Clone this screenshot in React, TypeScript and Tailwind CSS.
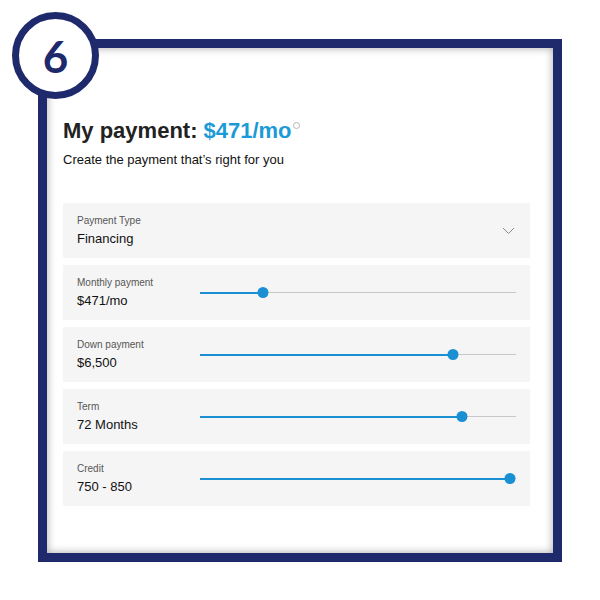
import React from "react";

interface SliderRowProps {
  label: string;
  value: string;
  percent: number;
}

const ROWS: SliderRowProps[] = [
  { label: "Monthly payment", value: "$471/mo", percent: 20 },
  { label: "Down payment", value: "$6,500", percent: 80 },
  { label: "Term", value: "72 Months", percent: 83 },
  { label: "Credit", value: "750 - 850", percent: 98 },
];

function Slider({ percent }: { percent: number }) {
  return (
    <div className="relative h-[12px] w-[316px]">
      <div className="absolute left-0 right-0 top-[5.5px] h-px bg-[#c8c8c8]" />
      <div
        className="absolute left-0 top-[5px] h-[2px] bg-[#1a8fd3]"
        style={{ width: `${percent}%` }}
      />
      <div
        className="absolute top-0 h-[11px] w-[11px] -translate-x-1/2 rounded-full bg-[#1a8fd3]"
        style={{ left: `${percent}%` }}
      />
    </div>
  );
}

function SliderRow({ label, value, percent }: SliderRowProps) {
  return (
    <div className="flex h-[55px] items-center bg-[#f5f5f5] pl-[14px] pr-[14px]">
      <div className="w-[123px] pt-[1px]">
        <div className="text-[10px] leading-[12px] text-[#555]">{label}</div>
        <div className="mt-[4px] text-[13px] leading-[16px] text-[#111]">{value}</div>
      </div>
      <Slider percent={percent} />
    </div>
  );
}

export default function App() {
  return (
    <div className="relative h-[600px] w-[600px] bg-white font-['Liberation_Sans',Arial,sans-serif]">
      <div className="absolute left-[38px] top-[39px] h-[523px] w-[524px] border-[9px] border-[#1f2a6c] bg-white shadow-[inset_0_0_8px_rgba(0,0,0,0.35)]">
        <div className="pl-[16px] pr-[23px] pt-[70px]">
          <h1 className="flex items-start text-[22px] font-bold leading-[26px] text-[#222]">
            <span>My payment:</span>
            <span className="ml-[6px] text-[#1b9ad7]">$471/mo</span>
            <span className="ml-[1px] mt-[4px] h-[7px] w-[7px] rounded-full border border-[#b5b5b5]" />
          </h1>
          <p className="mt-[8px] text-[13px] leading-[16px] text-[#111]">
            Create the payment that’s right for you
          </p>

          <div className="mt-[35px] flex flex-col gap-[7px]">
            <div className="flex h-[55px] items-center justify-between bg-[#f5f5f5] pl-[14px] pr-[14px]">
              <div className="pt-[1px]">
                <div className="text-[10px] leading-[12px] text-[#555]">Payment Type</div>
                <div className="mt-[4px] text-[13px] leading-[16px] text-[#111]">Financing</div>
              </div>
              <svg width="13" height="8" viewBox="0 0 13 8" fill="none" className="mr-[1px]">
                <path d="M1 1l5.5 5.5L12 1" stroke="#8a8a8a" strokeWidth="1" />
              </svg>
            </div>
            {ROWS.map((r) => (
              <SliderRow key={r.label} {...r} />
            ))}
          </div>
        </div>
      </div>

      {/* step badge */}
      <div className="absolute left-[12px] top-[12px] flex h-[87px] w-[87px] items-center justify-center rounded-full border-[7px] border-[#1f2a6c] bg-white">
        <span className="text-[44px] font-bold leading-none text-[#1f2a6c] font-['Lato','Open_Sans',sans-serif]">6</span>
      </div>
    </div>
  );
}
